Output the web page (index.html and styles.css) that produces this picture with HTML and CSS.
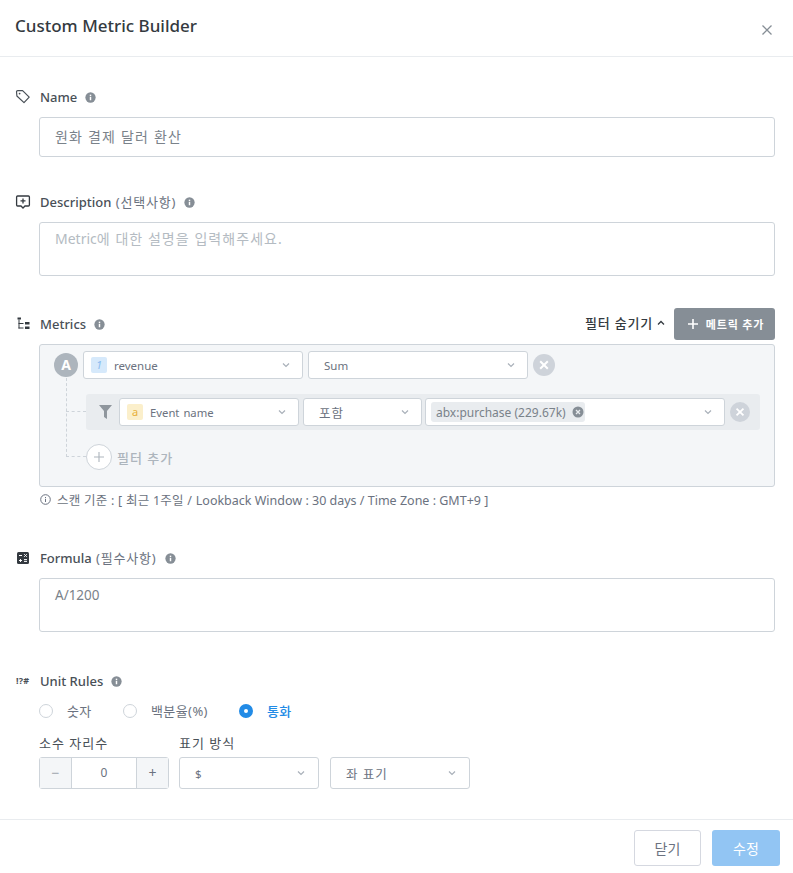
FILE: index.html
```html
<!DOCTYPE html>
<html lang="ko">
<head>
<meta charset="utf-8">
<title>Custom Metric Builder</title>
<link rel="stylesheet" href="styles.css">
</head>
<body>
<svg class="defs" width="0" height="0" aria-hidden="true">
  <symbol id="info" viewBox="0 0 12 12"><circle cx="6" cy="6" r="5.6" fill="currentColor"/><rect x="5.2" y="5.2" width="1.6" height="3.8" fill="#fff"/><rect x="5.2" y="2.9" width="1.6" height="1.5" fill="#fff"/></symbol>
  <symbol id="chev" viewBox="0 0 10 10"><path d="M2 3.5 5 6.5 8 3.5" fill="none" stroke="#a9b0b9" stroke-width="1.2"/></symbol>
  <symbol id="x" viewBox="0 0 22 22"><circle cx="11" cy="11" r="11" fill="#ced3da"/><path d="M7.2 7.2 14.8 14.8M14.8 7.2 7.2 14.8" stroke="#fff" stroke-width="2"/></symbol>
</svg>
<div class="modal">
  <header class="head">
    <h1 class="title">Custom Metric Builder</h1>
    <svg class="close" width="12" height="12" viewBox="0 0 12 12"><path d="M1.5 1.5 10.5 10.5M10.5 1.5 1.5 10.5" stroke="#868e96" stroke-width="1.3"/></svg>
  </header>

  <section class="sec sec-name">
    <div class="label">
      <svg class="ico ico-l" width="16" height="16" viewBox="0 0 16 16"><path d="M1.5 2.8C1.5 2.1 2.1 1.6 2.8 1.6H7.6L14.2 8.2 9 13.6 1.9 7Z" fill="none" stroke="#495057" stroke-width="1.2" stroke-linejoin="round"/><circle cx="4.6" cy="4.6" r=".9" fill="#495057"/></svg>
      <span class="lt">Name</span>
      <svg class="inf" width="12" height="12"><use href="#info"/></svg>
    </div>
    <div class="field input-h">원화 결제 달러 환산</div>
  </section>

  <section class="sec sec-desc">
    <div class="label">
      <svg class="ico ico-l" width="16" height="16" viewBox="0 0 16 16"><path d="M2.6 2H13.4C14 2 14.4 2.4 14.4 3V11C14.4 11.6 14 12 13.4 12H10L8 14 6 12H2.6C2 12 1.6 11.6 1.6 11V3C1.6 2.4 2 2 2.6 2Z" fill="none" stroke="#343a40" stroke-width="1.3"/><path d="M8 4.4V9.4M5.5 6.9H10.5" stroke="#343a40" stroke-width="1.3"/></svg>
      <span class="lt">Description <span class="opt">(선택사항)</span></span>
      <svg class="inf" width="12" height="12"><use href="#info"/></svg>
    </div>
    <div class="field area-d ph">Metric<span class="ko">에 대한 설명을 입력해주세요.</span></div>
  </section>

  <section class="sec sec-metrics">
    <div class="label label-m">
      <svg class="ico" width="16" height="16" viewBox="0 0 16 16" fill="#343a40"><rect x="1.5" y="1.5" width="3.5" height="2"/><rect x="2.5" y="3.5" width="1" height="9"/><rect x="2.5" y="7" width="5" height="1"/><rect x="2.5" y="11.5" width="5" height="1"/><rect x="9" y="6" width="4.5" height="2.5"/><rect x="9" y="10.5" width="4.5" height="2.5"/></svg>
      <span class="lt">Metrics</span>
      <svg class="inf" width="12" height="12"><use href="#info"/></svg>
      <span class="spacer"></span>
      <span class="toggle"><span class="tt">필터 숨기기</span>
        <svg width="10" height="10" viewBox="0 0 10 10"><path d="M2 6.5 5 3.5 8 6.5" fill="none" stroke="#343a40" stroke-width="1.3"/></svg>
      </span>
      <button class="add"><svg width="12" height="12" viewBox="0 0 12 12"><path d="M6 1V11M1 6H11" stroke="#fff" stroke-width="1.6"/></svg>메트릭 추가</button>
    </div>
    <div class="panel">
      <div class="row-a">
        <span class="letter">A</span>
        <div class="sel w220"><span class="badge b-num">1</span><span class="sv">revenue</span><svg class="cv" width="10" height="10"><use href="#chev"/></svg></div>
        <div class="sel w220 pad"><span class="sv">Sum</span><svg class="cv" width="10" height="10"><use href="#chev"/></svg></div>
        <svg class="rm" width="22" height="22"><use href="#x"/></svg>
      </div>
      <div class="filter">
        <span class="dash d-h1"></span>
        <svg class="fun" width="13" height="14" viewBox="0 0 14 15"><path d="M0 0H14L8.6 6.5V15L5.4 13V6.5Z" fill="#8f969d"/></svg>
        <div class="sel w180"><span class="badge b-str">a</span><span class="sv sv-e">Event name</span><svg class="cv" width="10" height="10"><use href="#chev"/></svg></div>
        <div class="sel w119 pad"><span class="sv kos">포함</span><svg class="cv" width="10" height="10"><use href="#chev"/></svg></div>
        <div class="sel w300">
          <span class="tag">abx:purchase (229.67k)<svg width="12" height="12" viewBox="0 0 12 12"><circle cx="6" cy="6" r="5.5" fill="#868e96"/><path d="M4 4 8 8M8 4 4 8" stroke="#e9ecef" stroke-width="1.3"/></svg></span>
          <svg class="cv" width="10" height="10"><use href="#chev"/></svg>
        </div>
        <svg class="rm rm2" width="20" height="20"><use href="#x"/></svg>
      </div>
      <div class="addf">
        <span class="dash d-v"></span>
        <span class="dash d-h2"></span>
        <span class="circle"><svg width="10" height="10" viewBox="0 0 10 10"><path d="M5 0V10M0 5H10" stroke="#adb5bd" stroke-width="1.1"/></svg></span>
        <span class="addt">필터 추가</span>
      </div>
    </div>
    <div class="note">
      <svg width="11" height="11" viewBox="0 0 11 11"><circle cx="5.5" cy="5.5" r="4.8" fill="none" stroke="#6b7280" stroke-width="1"/><path d="M5.5 4.8V8M5.5 3V4" stroke="#6b7280" stroke-width="1"/></svg>
      <span><span class="note-ko">스캔 기준 : [ 최근 1주일 / </span>Lookback Window : 30 days / Time Zone : GMT+9 ]</span>
    </div>
  </section>

  <section class="sec sec-formula">
    <div class="label">
      <svg class="ico ico-l" width="16" height="16" viewBox="0 0 16 16"><rect x="2" y="2" width="12" height="12" rx="1.5" fill="#343a40"/><path d="M4 5.5H7M9.2 4.2 11.8 6.8M11.8 4.2 9.2 6.8M4 10.5H7M5.5 9V12M9 9.6H12M9 11.4H12" stroke="#fff" stroke-width="1"/></svg>
      <span class="lt">Formula <span class="opt">(필수사항)</span></span>
      <svg class="inf" width="12" height="12"><use href="#info"/></svg>
    </div>
    <div class="field area-f val">A/1200</div>
  </section>

  <section class="sec sec-unit">
    <div class="label">
      <span class="ico sym">!?#</span>
      <span class="lt">Unit Rules</span>
      <svg class="inf" width="12" height="12"><use href="#info"/></svg>
    </div>
    <div class="indent">
      <div class="radios">
        <span class="radio r1"><i class="dot"></i>숫자</span>
        <span class="radio r2"><i class="dot"></i>백분율(%)</span>
        <span class="radio on"><i class="dot"></i>통화</span>
      </div>
      <div class="units">
        <div class="ucol">
          <div class="ul">소수 자리수</div>
          <div class="stepper"><span class="st">−</span><span class="sn">0</span><span class="st st2">+</span></div>
        </div>
        <div class="ucol">
          <div class="ul">표기 방식</div>
          <div class="urow">
            <div class="sel u-sel"><span class="sv">$</span><svg class="cv" width="10" height="10"><use href="#chev"/></svg></div>
            <div class="sel u-sel"><span class="sv kos">좌 표기</span><svg class="cv" width="10" height="10"><use href="#chev"/></svg></div>
          </div>
        </div>
      </div>
    </div>
  </section>

  <footer class="foot">
    <button class="btn close-b">닫기</button>
    <button class="btn save">수정</button>
  </footer>
</div>
</body>
</html>
```
FILE: styles.css
```css
* { box-sizing: border-box; }
html, body { margin: 0; padding: 0; background: #fff; }
body { font-family: "Noto Sans", "Noto Sans CJK KR", sans-serif; color: #495057; font-size: 13px; width: 793px; height: 873px; overflow: hidden; }
.defs { position: absolute; }
.modal { display: flex; flex-direction: column; height: 873px; }
.head { height: 57px; border-bottom: 1px solid #e9ecef; display: flex; align-items: flex-start; justify-content: space-between; padding: 14px 20px 0 15px; flex: none; }
.title { margin: 0; font-size: 17px; font-weight: 500; line-height: 24px; color: #343a40; }
.close { margin-top: 10px; }
.sec { padding: 0 18px 0 16px; flex: none; }
.label { display: flex; align-items: center; height: 20px; }
.ico { width: 16px; height: 16px; margin-right: 8px; flex: none; }
.ico-l { margin-left: -1px; margin-right: 9px; }
.sym { font-size: 9px; font-weight: 700; line-height: 16px; color: #495057; white-space: nowrap; letter-spacing: .2px; }
.lt { font-size: 13px; font-weight: 500; color: #495057; line-height: 20px; white-space: nowrap; }
.opt { font-weight: 400; color: #6b7280; letter-spacing: .8px; margin-left: 1px; }
.inf { color: #868e96; margin-left: 8px; width: 11px; height: 11px; }
.field { margin-left: 23px; border: 1px solid #ced4da; border-radius: 3px; font-size: 14px; color: #7a828a; padding: 0 15px; }
.sec-name { margin-top: 30px; }
.input-h { height: 40px; line-height: 38px; margin-top: 10px; letter-spacing: 1.2px; }
.sec-desc { margin-top: 35px; }
.area-d { height: 54px; margin-top: 10px; line-height: 20px; padding-top: 6px; }
.ph { color: #b4bbc2; }
.ko { letter-spacing: 1.05px; }
.sec-metrics { margin-top: 32px; }
.label-m { height: 32px; margin-bottom: 4px; }
.spacer { flex: 1; }
.toggle { font-size: 13px; font-weight: 500; color: #343a40; display: flex; align-items: center; gap: 3px; margin: -3px 8px 0 0; white-space: nowrap; }
.tt { letter-spacing: .8px; }
.add { width: 101px; height: 32px; background: #868e96; border: 0; border-radius: 3px; color: #fff; font: 700 11px "Noto Sans", "Noto Sans CJK KR", sans-serif; letter-spacing: .8px; display: flex; align-items: center; justify-content: center; gap: 7px; padding: 0 0 0 2px; }
.panel { margin-left: 23px; height: 143px; background: #f4f6f8; border: 1px solid #ced4da; border-radius: 3px; padding: 6px 0 0 14px; position: relative; }
.row-a { display: flex; align-items: center; gap: 5px; }
.letter { width: 24px; height: 24px; border-radius: 50%; background: #adb5bd; color: #fff; font-weight: 700; font-size: 14px; text-align: center; line-height: 24px; flex: none; }
.sel { height: 28px; background: #fff; border: 1px solid #ced4da; border-radius: 3px; display: flex; align-items: center; padding: 0 8px 0 7px; font-size: 11.5px; color: #6b7280; position: relative; flex: none; }
.pad { padding-left: 15px; }
.w220 { width: 220px; }
.w180 { width: 180px; }
.w119 { width: 119px; }
.w300 { width: 300px; padding-left: 5px; margin-left: -1px; }
.badge { width: 16px; height: 16px; border-radius: 2px; font-size: 11px; font-style: italic; text-align: center; line-height: 16px; margin-right: 7px; flex: none; }
.b-num { background: #d6e9fb; color: #8dbdf0; }
.b-str { background: #fbefcb; color: #e7b03a; font-style: normal; }
.sv { white-space: nowrap; }
.sv-e { word-spacing: 1px; font-size: 11.3px; }
.kos { font-size: 12.5px; letter-spacing: 1px; }
.cv { position: absolute; right: 11px; top: 8px; }
.rm { margin-left: 0; flex: none; }
.filter { margin: 15px 0 0 32px; width: 674px; height: 36px; background: #e9ecef; border-radius: 3px; display: flex; align-items: center; gap: 4px; padding-left: 13px; position: relative; }
.fun { margin-right: 3px; flex: none; }
.rm2 { margin-left: 1px; }
.tag { display: flex; align-items: center; gap: 6px; height: 20px; background: #e9ecef; border-radius: 3px; padding: 0 0 0 5px; width: 154px; font-size: 12px; white-space: nowrap; color: #7a828a; }
.addf { display: flex; align-items: center; margin: 14px 0 0 32px; height: 26px; position: relative; }
.circle { width: 26px; height: 26px; border: 1px solid #ced4da; border-radius: 50%; background: #fff; display: flex; align-items: center; justify-content: center; flex: none; }
.addt { margin-left: 5px; font-size: 13px; color: #adb5bd; font-weight: 500; letter-spacing: 1px; }
.dash { position: absolute; }
.d-h1 { left: -20px; top: 17px; width: 20px; border-top: 1px dashed #ced4da; }
.d-v { left: -20px; top: -66px; height: 79px; border-left: 1px dashed #ced4da; }
.d-h2 { left: -20px; top: 12px; width: 20px; border-top: 1px dashed #ced4da; }
.note { margin: 3px 0 0 24px; height: 18px; display: flex; align-items: center; gap: 6px; font-size: 12.5px; color: #6b7280; white-space: nowrap; }
.note-ko { letter-spacing: .25px; }
.sec-formula { margin-top: 40px; }
.area-f { height: 54px; margin-top: 10px; line-height: 20px; padding-top: 6px; font-size: 13.5px; }
.val { color: #7a828a; }
.sec-unit { margin-top: 39px; }
.indent { margin-left: 23px; }
.radios { display: flex; margin-top: 10px; height: 20px; align-items: center; font-size: 13px; line-height: 18px; color: #6b7280; letter-spacing: .4px; }
.radio { display: flex; align-items: center; }
.dot { width: 14px; height: 14px; border: 1px solid #ced4da; border-radius: 50%; background: #fff; margin-right: 14px; flex: none; }
.r1 { width: 84px; }
.r2 { width: 116px; }
.on { color: #228be6; font-weight: 500; }
.on .dot { border: 5px solid #228be6; }
.units { display: flex; gap: 10px; margin-top: 12px; }
.ul { font-size: 13px; color: #495057; height: 20px; line-height: 20px; margin-bottom: 4px; letter-spacing: 1px; }
.stepper { width: 130px; height: 32px; border: 1px solid #ced4da; border-radius: 3px; display: flex; font-size: 12px; color: #6b7280; }
.st { width: 32px; background: #f4f6f8; border-right: 1px solid #ced4da; text-align: center; line-height: 30px; color: #a0a7af; flex: none; font-size: 14px; }
.st2 { border-right: 0; border-left: 1px solid #ced4da; color: #6b7280; }
.sn { flex: 1; text-align: center; line-height: 30px; }
.urow { display: flex; gap: 11px; }
.u-sel { width: 140px; height: 32px; padding-left: 15px; }
.u-sel .cv { top: 10px; right: 12px; }
.foot { margin-top: auto; height: 54px; border-top: 1px solid #e9ecef; display: flex; justify-content: flex-end; gap: 11px; padding: 10px 13px 0 0; flex: none; }
.btn { height: 36px; border-radius: 3px; font: 400 14px "Noto Sans", "Noto Sans CJK KR", sans-serif; padding: 0; }
.close-b { width: 67px; background: #fff; border: 1px solid #d5d8e0; color: #6b7280; }
.save { width: 68px; background: #92c5f3; border: 0; color: #fff; }
```
